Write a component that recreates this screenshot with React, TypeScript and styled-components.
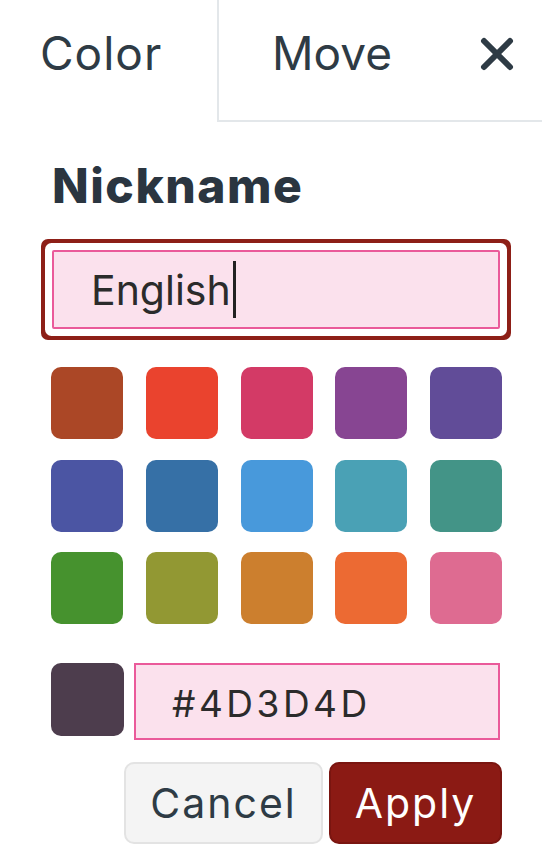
import React, { useState } from 'react';
import styled, { createGlobalStyle } from 'styled-components';

const GlobalStyle = createGlobalStyle`
  html, body {
    margin: 0;
    padding: 0;
    background: #ffffff;
  }
  body {
    font-family: Inter, 'Noto Sans', sans-serif;
    color: #2e3b45;
  }
`;

const Panel = styled.div`
  width: 542px;
  height: 860px;
  overflow: hidden;
  background: #ffffff;
`;

const TabBar = styled.div`
  display: flex;
  height: 122px;
`;

const Tab = styled.div<{ $active?: boolean }>`
  box-sizing: border-box;
  display: flex;
  align-items: flex-start;
  padding-top: 25px;
  font-size: 46px;
  line-height: 56px;
  color: #2e3b45;
  ${(p) =>
    p.$active
      ? `
    width: 217px;
    padding-left: 40px;
    letter-spacing: 1px;
  `
      : `
    flex: 1;
    padding-left: 53px;
    padding-right: 28px;
    border-left: 2px solid #e3e7ea;
    border-bottom: 2px solid #e3e7ea;
    justify-content: space-between;
  `}
`;

const CloseButton = styled.button`
  border: none;
  background: none;
  padding: 0;
  margin-top: 12px;
  width: 34px;
  height: 34px;
  cursor: pointer;
  color: #2e3b45;
`;

const Body = styled.div`
  padding: 0 42px 0 52px;
  display: flex;
  flex-direction: column;
`;

const Label = styled.div`
  margin-top: 36px;
  font-weight: 800;
  font-size: 48px;
  line-height: 56px;
  letter-spacing: 1.5px;
  color: #2a3540;
`;

const NameField = styled.div`
  box-sizing: border-box;
  margin-top: 36px;
  height: 79px;
  display: flex;
  align-items: center;
  padding-left: 37px;
  background: #fbe1ed;
  border: 2px solid #ea5a9a;
  border-radius: 2px;
  box-shadow: 0 0 0 7px #ffffff, 0 0 0 11px #8d1f17;
  font-size: 41px;
  color: #2b2b2b;
`;

const Caret = styled.span`
  display: inline-block;
  width: 3px;
  height: 57px;
  background: #222;
  margin-left: 2px;
`;

const SwatchGrid = styled.div`
  margin-top: 38px;
  margin-left: -1px;
  width: 451px;
  display: grid;
  grid-template-columns: repeat(5, 72px);
  justify-content: space-between;
  row-gap: 20.5px;
`;

const Swatch = styled.button<{ $color: string; $size?: number }>`
  width: ${(p) => p.$size ?? 72}px;
  height: ${(p) => p.$size ?? 72}px;
  border: none;
  padding: 0;
  border-radius: 10px;
  background: ${(p) => p.$color};
  cursor: pointer;
`;

const CustomRow = styled.div`
  margin-top: 39px;
  margin-left: -1px;
  display: flex;
  gap: 10px;
`;

const HexField = styled.div`
  box-sizing: border-box;
  flex: 1;
  height: 77px;
  display: flex;
  align-items: center;
  padding-left: 36px;
  padding-top: 3px;
  background: #fbe1ed;
  border: 2px solid #ea5a9a;
  font-size: 37px;
  letter-spacing: 3.5px;
  color: #2b2b2b;
`;

const Actions = styled.div`
  margin-top: 22px;
  margin-right: -2px;
  display: flex;
  justify-content: flex-end;
  gap: 6px;
`;

const ActionButton = styled.button<{ $primary?: boolean }>`
  box-sizing: border-box;
  height: 82px;
  width: ${(p) => (p.$primary ? 173 : 199)}px;
  border-radius: 10px;
  font-family: Inter, 'Noto Sans', sans-serif;
  font-size: 41px;
  letter-spacing: 2px;
  cursor: pointer;
  background: ${(p) => (p.$primary ? '#8b1a14' : '#f4f4f4')};
  color: ${(p) => (p.$primary ? '#ffffff' : '#2e3b45')};
  border: 2px solid ${(p) => (p.$primary ? '#7a1510' : '#e3e3e3')};
`;

const palette = [
  '#ab4726', '#ea432e', '#d33a66', '#874592', '#614c98',
  '#4b55a3', '#3670a6', '#4899db', '#4aa1b5', '#439487',
  '#46922e', '#929833', '#cc7f2e', '#ec6a33', '#de6b91',
];

const App: React.FC = () => {
  const [color, setColor] = useState('#4D3D4D');

  return (
    <Panel>
      <GlobalStyle />
      <TabBar>
        <Tab $active>Color</Tab>
        <Tab>
          <span>Move</span>
          <CloseButton aria-label="Close">
            <svg width="34" height="34" viewBox="0 0 34 34">
              <path
                d="M4 4 L30 30 M30 4 L4 30"
                stroke="currentColor"
                strokeWidth="6"
                strokeLinecap="round"
              />
            </svg>
          </CloseButton>
        </Tab>
      </TabBar>
      <Body>
        <Label>Nickname</Label>
        <NameField>
          English
          <Caret />
        </NameField>
        <SwatchGrid>
          {palette.map((c) => (
            <Swatch key={c} $color={c} onClick={() => setColor(c.toUpperCase())} />
          ))}
        </SwatchGrid>
        <CustomRow>
          <Swatch $color={color} $size={73} />
          <HexField>{color}</HexField>
        </CustomRow>
        <Actions>
          <ActionButton>Cancel</ActionButton>
          <ActionButton $primary>Apply</ActionButton>
        </Actions>
      </Body>
    </Panel>
  );
};

export default App;
